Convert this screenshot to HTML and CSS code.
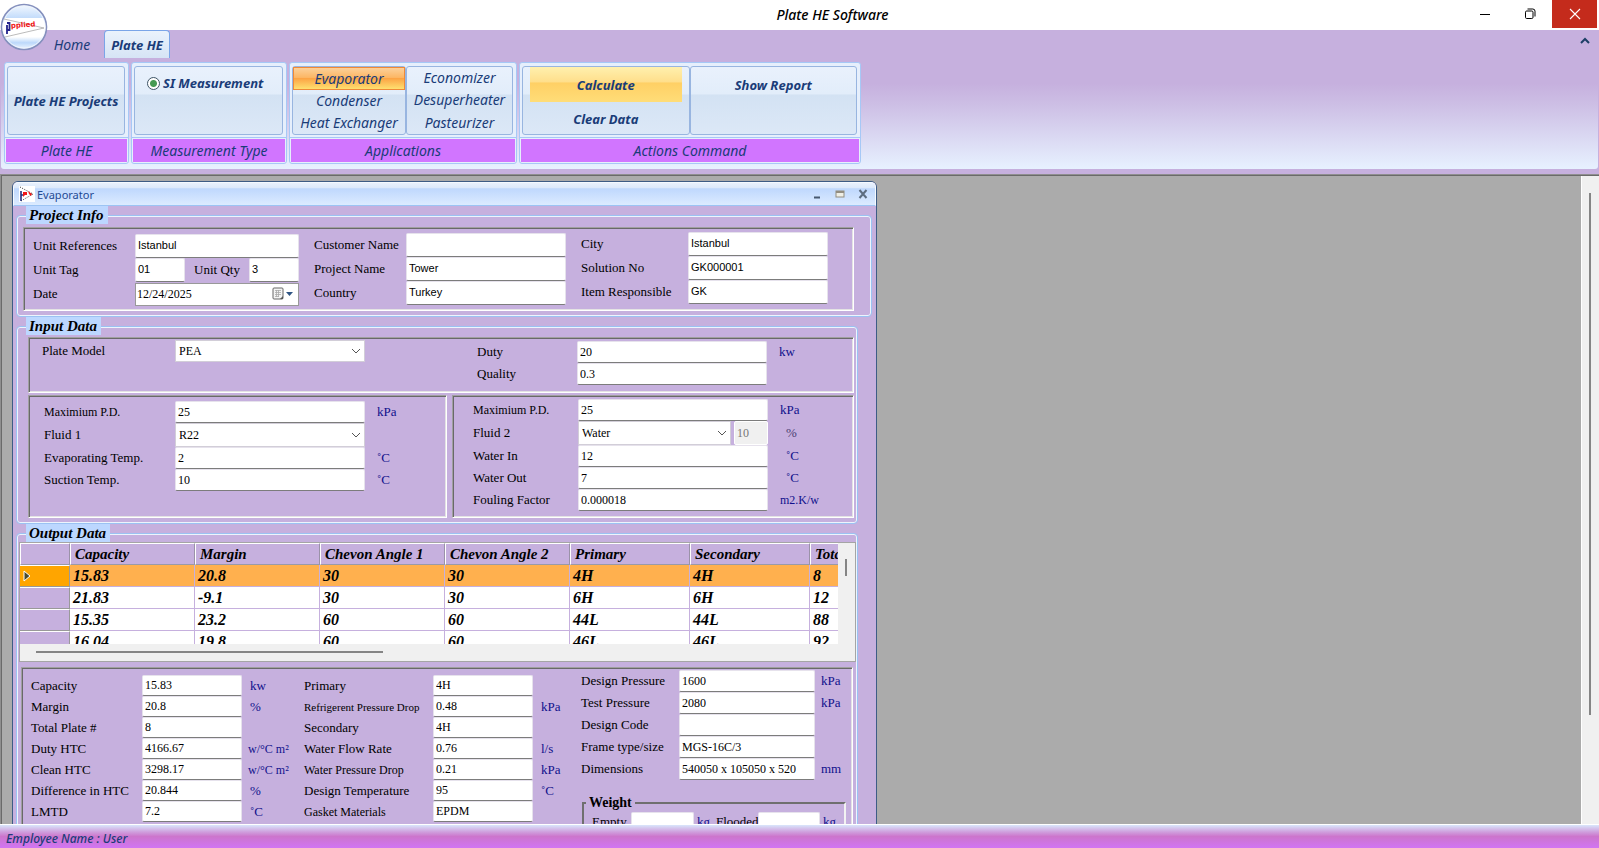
FILE: index.html
```html
<!DOCTYPE html>
<html lang="en">
<head>
<meta charset="utf-8">
<title>Plate HE Software</title>
<link rel="stylesheet" href="styles.css">
</head>
<body>
<header class="titlebar">
  <h1 class="app-title">Plate HE Software</h1>
  <div class="win-controls">
    <button class="win-btn" aria-label="Minimize"><svg width="12" height="12" viewBox="0 0 12 12"><path d="M1 6.5h10" stroke="#000"/></svg></button>
    <button class="win-btn" aria-label="Restore"><svg width="12" height="12" viewBox="0 0 12 12" fill="none" stroke="#000"><rect x="1.5" y="3" width="7.5" height="7.5" rx="1.2"/><path d="M3.5 1h5.3q2.200 0 2.200 2.200v5.300"/></svg></button>
    <button class="win-btn win-close" aria-label="Close"><svg width="12" height="12" viewBox="0 0 12 12"><path d="M1 1l10 10M11 1L1 11" stroke="#fff" stroke-width="1.1"/></svg></button>
  </div>
</header>

<button class="orb" aria-label="Application menu">
  <svg width="48" height="48" viewBox="0 0 48 48">
    <defs>
      <linearGradient id="orbTop" x1="0" y1="0" x2="0" y2="1"><stop offset="0" stop-color="#f4f9ff"/><stop offset=".3" stop-color="#c3dcfb"/><stop offset=".5" stop-color="#fff"/><stop offset=".72" stop-color="#fff"/><stop offset=".85" stop-color="#bcd8fa"/><stop offset="1" stop-color="#f2f8ff"/></linearGradient>
      <clipPath id="orbClip"><circle cx="24" cy="24" r="21"/></clipPath>
    </defs>
    <circle cx="24" cy="24" r="22.500" fill="url(#orbTop)" stroke="#8590bd" stroke-width="1.600"/>
    <circle cx="24" cy="24" r="21" fill="none" stroke="#eef4fc"/>
    <g clip-path="url(#orbClip)"><rect x="2" y="15" width="44" height="19" fill="#fff"/></g>
    <path d="M4 16L44 25L5 34" fill="none" stroke="#aaa" stroke-width=".8"/>
    <path d="M7 22v9M7 20h2.500v4M9.500 24v3H7" fill="none" stroke="#24248c" stroke-width="1.800"/>
    <text x="11" y="25" class="orb-text" transform="rotate(-4 11 25)">pplied</text>
  </svg>
</button>

<nav class="tabs">
  <button class="tab">Home</button>
  <button class="tab tab-active">Plate HE</button>
  <button class="collapse" aria-label="Collapse ribbon"><svg width="12" height="8" viewBox="0 0 12 8"><path d="M2 6l4-4 4 4" fill="none" stroke="#1d3f66" stroke-width="2"/></svg></button>
</nav>

<section class="ribbon">
  <div class="group group-plate">
    <div class="group-body"><button class="cell strong">Plate HE Projects</button></div>
    <div class="group-label">Plate HE</div>
  </div>
  <div class="group group-measure">
    <div class="group-body"><div class="cell cell-top"><label class="radio-row strong"><input type="radio" class="radio" name="unit" checked>SI Measurement</label></div></div>
    <div class="group-label">Measurement Type</div>
  </div>
  <div class="group group-apps">
    <div class="group-body">
      <div class="cell cell-stack"><button class="app-btn app-on">Evaporator</button><button class="app-btn">Condenser</button><button class="app-btn">Heat Exchanger</button></div>
      <div class="cell cell-stack cell-narrow"><button class="app-btn">Economizer</button><button class="app-btn">Desuperheater</button><button class="app-btn">Pasteurizer</button></div>
    </div>
    <div class="group-label">Applications</div>
  </div>
  <div class="group group-actions">
    <div class="group-body">
      <div class="cell cell-actions"><button class="act-btn act-on">Calculate</button><button class="act-btn act-last">Clear Data</button></div>
      <div class="cell cell-actions"><button class="act-btn">Show Report</button></div>
    </div>
    <div class="group-label">Actions Command</div>
  </div>
</section>

<main class="mdi">
  <div class="mdi-canvas">
  <section class="child">
    <header class="child-bar">
      <svg width="16" height="16" viewBox="0 0 16 16"><rect width="16" height="16" fill="#fff"/><path d="M1 1l13 7L2 15" fill="none" stroke="#333" stroke-dasharray="1 1.500"/><path d="M2 5v10M2 9h2" stroke="#24307e" stroke-width="1.600"/><path d="M4 6h4v3H6l-2 2M9 5l4 3-1 2-2-2" fill="#f01818"/></svg>
      <h2 class="child-title">Evaporator</h2>
      <div class="child-controls">
        <button class="mini" aria-label="Minimize window"><svg width="10" height="10" viewBox="0 0 10 10"><path d="M2 8.500h6" stroke="#47586f" stroke-width="2"/></svg></button>
        <button class="mini" aria-label="Maximize window"><svg width="10" height="10" viewBox="0 0 10 10"><rect x="1" y="2" width="8" height="6" fill="#efefe6" stroke="#928d80"/><path d="M1 3h8" stroke="#928d80" stroke-width="2"/></svg></button>
        <button class="mini" aria-label="Close window"><svg width="10" height="10" viewBox="0 0 10 10"><path d="M1.500 1l7 8M8.500 1l-7 8" stroke="#5d6d80" stroke-width="2"/></svg></button>
      </div>
    </header>
    <form class="child-body">
      <fieldset class="box box-wide">
        <legend class="box-title">Project Info</legend>
        <div class="panel project">
          <div class="fields proj-a">
            <label for="uref">Unit References</label><input id="uref" class="tb" value="Istanbul">
            <label for="utag">Unit Tag</label>
            <div class="tag-row"><input id="utag" class="tb" value="01"><label for="uqty">Unit Qty</label><input id="uqty" class="tb" value="3"></div>
            <label for="date">Date</label>
            <div class="date"><input id="date" class="date-text" value="12/24/2025"><button type="button" class="date-btn" aria-label="Open calendar"><svg width="22" height="14" viewBox="0 0 22 14"><rect x="1" y="1" width="10" height="11" rx="1" fill="#f4f4f4" stroke="#666"/><path d="M3 3.500h6M3 5.500h6M3 7.500h6M3 9.500h4M4.500 3v7M6.500 3v7" stroke="#aaa" stroke-width=".8"/><path d="M11 9v3H8z" fill="#555"/><path d="M14 5h7l-3.500 4z" fill="#2f5483"/></svg></button></div>
          </div>
          <div class="fields proj-b">
            <label for="cust">Customer Name</label><input id="cust" class="tb">
            <label for="proj">Project Name</label><input id="proj" class="tb" value="Tower">
            <label for="ctry">Country</label><input id="ctry" class="tb" value="Turkey">
          </div>
          <div class="fields proj-c">
            <label for="city">City</label><input id="city" class="tb" value="Istanbul">
            <label for="soln">Solution No</label><input id="soln" class="tb" value="GK000001">
            <label for="resp">Item Responsible</label><input id="resp" class="tb" value="GK">
          </div>
        </div>
      </fieldset>

      <fieldset class="box box-input">
        <legend class="box-title">Input Data</legend>
        <div class="panel model">
          <div class="fields model-a">
            <label for="model">Plate Model</label>
            <span class="combo"><select id="model"><option>PEA</option></select><svg class="chev" width="10" height="6" viewBox="0 0 10 6"><path d="M1 1l4 4 4-4" fill="none" stroke="#555"/></svg></span>
          </div>
          <div class="fields model-b">
            <label for="duty">Duty</label><input id="duty" class="tb" value="20"><span class="unit">kw</span>
            <label for="qual">Quality</label><input id="qual" class="tb" value="0.3"><span class="unit"></span>
          </div>
        </div>
        <div class="sides">
          <div class="panel side-a">
            <div class="fields side-a-fields">
              <label for="mpd1" class="small">Maximium P.D.</label><input id="mpd1" class="tb" value="25"><span class="unit">kPa</span>
              <label for="fl1">Fluid 1</label><span class="combo"><select id="fl1"><option>R22</option></select><svg class="chev" width="10" height="6" viewBox="0 0 10 6"><path d="M1 1l4 4 4-4" fill="none" stroke="#555"/></svg></span><span class="unit"></span>
              <label for="evt">Evaporating Temp.</label><input id="evt" class="tb" value="2"><span class="unit">˚C</span>
              <label for="suc">Suction Temp.</label><input id="suc" class="tb" value="10"><span class="unit">˚C</span>
            </div>
          </div>
          <div class="panel side-b">
            <div class="fields side-b-fields">
              <label for="mpd2" class="small">Maximium P.D.</label><input id="mpd2" class="tb" value="25"><span class="unit">kPa</span>
              <label for="fl2">Fluid 2</label>
              <span class="fluid"><span class="combo"><select id="fl2"><option>Water</option></select><svg class="chev" width="10" height="6" viewBox="0 0 10 6"><path d="M1 1l4 4 4-4" fill="none" stroke="#555"/></svg></span><input class="tb" value="10" aria-label="Fluid 2 percentage" disabled></span><span class="unit unit-mid unit-grey">%</span>
              <label for="win">Water In</label><input id="win" class="tb" value="12"><span class="unit unit-mid">˚C</span>
              <label for="wout">Water Out</label><input id="wout" class="tb" value="7"><span class="unit unit-mid">˚C</span>
              <label for="foul">Fouling Factor</label><input id="foul" class="tb" value="0.000018"><span class="unit unit-long">m2.K/w</span>
            </div>
          </div>
        </div>
      </fieldset>

      <fieldset class="box box-output">
        <legend class="box-title">Output Data</legend>
        <div class="grid">
          <div class="grid-view">
            <table class="results">
              <colgroup><col class="c-head"><col class="c-wide"><col class="c-wide"><col class="c-wide"><col class="c-wide"><col class="c-mid"><col class="c-mid"><col class="c-mid"></colgroup>
              <thead><tr><td></td><th scope="col">Capacity</th><th scope="col">Margin</th><th scope="col">Chevon Angle 1</th><th scope="col">Chevon Angle 2</th><th scope="col">Primary</th><th scope="col">Secondary</th><th scope="col">Total Plate</th></tr></thead>
              <tbody>
                <tr class="selected"><td class="rh"><svg width="8" height="12" viewBox="0 0 8 12"><path d="M1 1v10l6-5z" fill="#4a4a30" stroke="#fff"/></svg></td><td>15.83</td><td>20.8</td><td>30</td><td>30</td><td>4H</td><td>4H</td><td>8</td></tr>
                <tr><td class="rh"></td><td>21.83</td><td>-9.1</td><td>30</td><td>30</td><td>6H</td><td>6H</td><td>12</td></tr>
                <tr><td class="rh"></td><td>15.35</td><td>23.2</td><td>60</td><td>60</td><td>44L</td><td>44L</td><td>88</td></tr>
                <tr><td class="rh"></td><td>16.04</td><td>19.8</td><td>60</td><td>60</td><td>46L</td><td>46L</td><td>92</td></tr>
              </tbody>
            </table>
          </div>
          <div class="vbar"><span class="vthumb"></span></div>
          <div class="hbar"><span class="hthumb"></span></div>
        </div>
        <div class="panel output">
          <div class="fields out-a">
            <label for="o1">Capacity</label><input id="o1" class="tb" value="15.83"><span class="unit">kw</span>
            <label for="o2">Margin</label><input id="o2" class="tb" value="20.8"><span class="unit">%</span>
            <label for="o3">Total Plate #</label><input id="o3" class="tb" value="8"><span class="unit"></span>
            <label for="o4">Duty HTC</label><input id="o4" class="tb" value="4166.67"><span class="unit unit-long">w/°C m²</span>
            <label for="o5">Clean HTC</label><input id="o5" class="tb" value="3298.17"><span class="unit unit-long">w/°C m²</span>
            <label for="o6">Difference in HTC</label><input id="o6" class="tb" value="20.844"><span class="unit">%</span>
            <label for="o7">LMTD</label><input id="o7" class="tb" value="7.2"><span class="unit">˚C</span>
          </div>
          <div class="fields out-b">
            <label for="p1">Primary</label><input id="p1" class="tb" value="4H"><span class="unit"></span>
            <label for="p2" class="tight">Refrigerent Pressure Drop</label><input id="p2" class="tb" value="0.48"><span class="unit">kPa</span>
            <label for="p3">Secondary</label><input id="p3" class="tb" value="4H"><span class="unit"></span>
            <label for="p4">Water Flow Rate</label><input id="p4" class="tb" value="0.76"><span class="unit">l/s</span>
            <label for="p5" class="small">Water Pressure Drop</label><input id="p5" class="tb" value="0.21"><span class="unit">kPa</span>
            <label for="p6">Design Temperature</label><input id="p6" class="tb" value="95"><span class="unit">˚C</span>
            <label for="p7" class="small">Gasket Materials</label><input id="p7" class="tb" value="EPDM"><span class="unit"></span>
          </div>
          <div class="out-c">
            <div class="fields out-c-fields">
              <label for="q1">Design Pressure</label><input id="q1" class="tb" value="1600"><span class="unit">kPa</span>
              <label for="q2">Test Pressure</label><input id="q2" class="tb" value="2080"><span class="unit">kPa</span>
              <label for="q3">Design Code</label><input id="q3" class="tb"><span class="unit"></span>
              <label for="q4">Frame type/size</label><input id="q4" class="tb" value="MGS-16C/3"><span class="unit"></span>
              <label for="q5">Dimensions</label><input id="q5" class="tb" value="540050 x 105050 x 520"><span class="unit">mm</span>
            </div>
            <fieldset class="weight">
              <legend>Weight</legend>
              <div class="weight-row"><label for="w1">Empty</label><input id="w1" class="tb"><span class="unit">kg</span><label for="w2">Flooded</label><input id="w2" class="tb"><span class="unit">kg</span></div>
            </fieldset>
          </div>
        </div>
      </fieldset>
    </form>
  </section>
  </div>
  <div class="mdi-scroll"><span class="mdi-thumb"></span></div>
</main>

<footer class="status">Employee Name : User</footer>
</body>
</html>
```
FILE: styles.css
```css
:root {
  --lav: #c6b0de;
  --ink: #1a3c78;
  --ui: "Noto Sans", "Open Sans", sans-serif;
  --serif: "Liberation Serif", "Times New Roman", serif;
}
* { box-sizing: border-box; }
body {
  margin: 0;
  height: 100vh;
  display: flex;
  flex-direction: column;
  overflow: hidden;
  background: var(--lav);
  font-family: var(--ui);
}
button { margin: 0; padding: 0; border: 0; background: none; font: inherit; color: inherit; }
svg { display: block; }

/* title bar */
.titlebar {
  flex: none;
  height: 30px;
  background: #fff;
  display: grid;
  grid-template-columns: 204px 1fr 138px;
}
.app-title {
  grid-column: 2;
  margin: 0;
  text-align: center;
  font-size: 14px;
  font-weight: 500;
  font-style: italic;
  line-height: 30px;
}
.win-controls { display: flex; justify-content: flex-end; padding-right: 2px; }
.win-btn { width: 45px; height: 28px; display: grid; place-items: center; }
.win-close { background: #c42b1c; }
.orb { position: absolute; left: 0; top: 3px; width: 48px; height: 48px; }
.orb-text { font: bold 7px "DejaVu Sans", sans-serif; fill: #f01414; }

/* tabs */
.tabs { flex: none; height: 32px; padding: 0 8px 4px 46px; display: flex; gap: 6px; color: var(--ink); font-size: 14px; font-style: italic; }
.tab { width: 52px; height: 28px; }
.tab-active {
  width: 66px;
  border: 1px solid #7aa5e8;
  border-bottom: 0;
  border-radius: 4px 4px 0 0;
  background: linear-gradient(#eaf2fc, #d6e4f5);
  font-size: 13px;
  font-weight: 700;
}
.collapse { margin-left: auto; width: 12px; height: 22px; display: grid; place-items: center; }

/* ribbon */
.ribbon {
  flex: none;
  height: 107px;
  margin: 0 1px 5px;
  padding: 0 3px 5px;
  display: flex;
  gap: 2px;
  border-radius: 0 0 3px 3px;
  background: linear-gradient(var(--lav) 20%, #cdbfe5 40%, #e7f1ff);
  color: var(--ink);
}
.group {
  display: flex;
  flex-direction: column;
  border: 1px solid #a6c8f6;
  border-radius: 3px;
  background: #e6effc;
}
.group-plate { width: 125px; }
.group-measure { width: 156px; }
.group-apps { width: 228px; }
.group-actions { width: 342px; }
.group-body { flex: 1; min-height: 0; display: flex; padding: 3px 3px 2px 2px; border-bottom: 1px solid #a6c8f6; }
.group-label {
  flex: none;
  height: 23px;
  margin: 1px;
  background: #d175ff;
  text-align: center;
  font-size: 14px;
  font-style: italic;
  line-height: 24px;
}
.cell {
  flex: 1;
  min-width: 0;
  border: 1px solid #98b5e0;
  border-radius: 3px;
  background: linear-gradient(#e9f1fc 0, #e2edfa 40%, #d3e2f3 42%, #dce8f7);
  font-style: italic;
}
.cell-narrow { flex: 0 0 107px; }
.strong { font-size: 13px; font-weight: 700; }
.cell-top { padding: 6px 12px; }
.radio-row { display: flex; align-items: center; gap: 3px; height: 20px; white-space: nowrap; }
.radio {
  appearance: none;
  width: 13px;
  height: 13px;
  margin: 0;
  border: 1px solid #3f5566;
  border-radius: 50%;
  background: radial-gradient(#459a52 0 3px, #fff 4px);
}
.cell-stack { display: flex; flex-direction: column; }
.app-btn { flex: 1; font-size: 14px; font-style: italic; line-height: 22px; white-space: nowrap; }
.app-on {
  border: 1px solid #ef8a38;
  background: linear-gradient(#fcd09a, #fcb765 45%, #fca445 50%, #fee070);
  line-height: 20px;
}
.cell-actions { display: flex; flex-direction: column; padding: 0 7px; }
.act-btn { flex: none; height: 35px; font-size: 13px; font-weight: 700; font-style: italic; }
.act-last { height: 33px; }
.act-on { background: linear-gradient(#fff0ae, #ffdf8c 42%, #ffd065 46%, #ffdd78); }

/* document area */
.mdi {
  flex: 1;
  min-height: 0;
  display: flex;
  border: 1px solid #8f8f8f;
  border-right: 0;
  border-bottom: 0;
  box-shadow: inset 1px 1px #6a6a6a;
  background: #ababab;
}
.mdi-canvas { flex: 1; min-width: 0; padding: 6px 11px 0; overflow: hidden; }
.mdi-scroll { width: 18px; margin-top: 1px; background: #f0f0f0; border-left: 1px solid #fff; padding: 17px 7px; }
.mdi-thumb { display: block; width: 2px; height: 85%; background: #858585; }

/* child window */
.child { width: 865px; border: 1px solid #3d5c85; border-radius: 6px 6px 0 0; background: var(--lav); }
.child-bar {
  height: 24px;
  padding: 0 7px 0 5px;
  display: flex;
  align-items: center;
  gap: 2px;
  border: 1px solid #f5faff;
  border-bottom: 1px solid #9cc4f4;
  border-radius: 5px 5px 0 0;
  background: linear-gradient(#e8f1fd 0, #dce9fb 22%, #bfd8fd 26%, #dcebff);
}
.child-title { margin: 0; font-size: 11px; font-weight: 400; color: #1f4a94; }
.child-controls { margin-left: auto; display: flex; gap: 13px; }
.mini { width: 10px; height: 10px; }
.child-body { padding: 0 4px 0 3px; font: 13px/18px var(--serif); color: #000; }

.box {
  min-width: 0;
  margin: 0 14px 0 0;
  padding: 2px 3px 5px 3px;
  border: 1px solid #9bc2f2;
  border-radius: 4px;
  box-shadow: inset 0 0 0 1px #edf4fd;
}
.box-wide { margin-right: 0; padding: 3px 17px 5px 6px; }
.box-input { padding-left: 11px; }
.box-title {
  margin-left: 3px;
  padding: 0 4px 0 3px;
  height: 18px;
  background: #bcd7ff;
  font-size: 15px;
  font-weight: 700;
  font-style: italic;
}
.box-input .box-title { margin-left: -2px; }
.box-output .box-title { margin-left: 7px; }
.panel {
  border: 1px solid;
  border-color: #a0a0a0 #fff #fff #a0a0a0;
  box-shadow: inset 1px 1px #696969, inset -1px -1px #e3e3e3;
}
.fields { display: grid; align-content: start; align-items: center; white-space: nowrap; }
.fields label { line-height: 18px; }
.unit { color: #10108c; padding-left: 12px; }
.unit-long { font-size: 12px; }
.unit-mid { padding-left: 18px; }
.unit-grey { color: #4b3f72; }
.tb {
  display: block;
  width: 100%;
  min-width: 0;
  height: 100%;
  margin: 0;
  padding: 0 2px;
  border: 1px solid #e6e2ec;
  border-bottom-color: #7c7c7c;
  border-radius: 2px;
  background: #fff;
  font: 12px var(--serif);
  color: #000;
}
.tb:disabled { background: #f0f0f0; color: #777; border-color: #fff; }
.combo { display: grid; align-items: center; height: 100%; }
.combo select, .combo .chev { grid-area: 1 / 1; }
.combo .chev { justify-self: end; margin-right: 4px; pointer-events: none; }
.combo select {
  appearance: none;
  width: 100%;
  height: 100%;
  padding: 0 3px;
  border: 1px solid #d2ced8;
  border-radius: 0;
  background: #fff;
  font: 12px var(--serif);
  color: #000;
}

/* project info */
.project { height: 84px; display: grid; grid-template-columns: 276px 273px 1fr; }
.project .fields { grid-auto-rows: 24px; }
.project .tb { font: 11px "Liberation Sans", Arial, sans-serif; padding-bottom: 3px; }
.proj-a { grid-template-columns: 102px 164px; padding: 6px 0 0 9px; }
.proj-b { grid-template-columns: 92px 160px; padding: 5px 0 0 14px; }
.proj-c { grid-template-columns: 107px 140px; padding: 4px 0 0 8px; }
.tag-row { height: 100%; display: grid; grid-template-columns: 50px 1fr 50px; align-items: center; text-align: center; }
.date { height: 23px; display: flex; align-items: center; border: 1px solid #999; background: #fff; }
.date-text { flex: 1; min-width: 0; border: 0; padding: 0 1px; font: 12px var(--serif); }
.date-btn { width: 22px; margin-right: 4px; }

/* input data */
.model { height: 56px; display: grid; grid-template-columns: 448px 1fr; margin-bottom: 2px; }
.model-a { grid-template-columns: 133px 190px; grid-auto-rows: 22px; padding: 2px 0 0 13px; }
.model-b { grid-template-columns: 100px 190px 1fr; grid-auto-rows: 22px; padding: 3px 0 0 0; }
.sides { display: grid; grid-template-columns: 419px 1fr; gap: 5px; }
.side-a { height: 123px; }
.side-a-fields { grid-template-columns: 131px 190px 1fr; grid-template-rows: 22px 24px 22px 22px; padding: 5px 0 0 15px; }
.side-b-fields { grid-template-columns: 105px 190px 1fr; grid-template-rows: 22px 24px 22px 22px 22px; padding: 3px 0 0 20px; }
.side-b { height: 123px; }
.fluid { height: 100%; display: grid; grid-template-columns: 1fr 34px; gap: 3px; }

/* results grid */
.box-output { padding: 0 1px 0 2px; }
.grid {
  display: grid;
  grid-template-columns: 1fr 17px;
  grid-template-rows: 101px 17px;
  border: 1px solid #a5a5a5;
  background: #f0f0f0;
  margin-bottom: 5px;
}
.grid-view { overflow: hidden; background: #fff; }
.results { width: 910px; table-layout: fixed; border-collapse: separate; border-spacing: 0; font-weight: 700; font-style: italic; }
.c-head { width: 50px; }
.c-wide { width: 125px; }
.c-mid { width: 120px; }
.results td, .results th { height: 22px; padding: 0 0 0 3px; line-height: 20px; text-align: left; border-right: 1px solid var(--lav); border-bottom: 1px solid var(--lav); font-size: 16px; }
.results thead th, .results thead td {
  height: 22px;
  padding-left: 4px;
  background: var(--lav);
  font-size: 15px;
  border-right: 1px solid #9a92a8;
  border-bottom: 1px solid #9a9aa8;
  border-left: 1px solid #fff;
  border-top: 1px solid #fff;
}
.results .rh { background: var(--lav); border-right-color: #999; border-bottom-color: #999; border-top: 1px solid #fff; }
.results .selected td { background: #ffb04e; }
.results .selected .rh { background: #ffa500; }
.vbar { padding: 16px 7px; }
.vthumb { display: block; width: 2px; height: 17px; background: #858585; }
.hbar { grid-column: 1 / 3; padding: 7px 16px; }
.hthumb { display: block; width: 347px; height: 2px; background: #858585; }

/* output data */
.output { margin: 0 3px 0 2px; height: 220px; display: grid; grid-template-columns: 274px 278px 1fr; }
.out-a { grid-template-columns: 111px 100px 1fr; grid-auto-rows: 21px; padding: 7px 0 0 9px; }
.out-b { grid-template-columns: 129px 100px 1fr; grid-auto-rows: 21px; padding: 7px 0 0 8px; }
.out-a .unit, .out-b .unit { padding-left: 8px; }
.out-a .unit-long { padding-left: 6px; }
.out-c-fields { grid-template-columns: 98px 136px 1fr; grid-auto-rows: 22px; padding: 2px 0 0 7px; }
.out-c-fields .unit { padding-left: 6px; }
.small { font-size: 12px; }
.tight { font-size: 11px; }
.weight { margin: 14px 6px 0 8px; padding: 0; height: 90px; border: 2px solid; border-color: #6f6f6f #f2f2f2 #f2f2f2 #6f6f6f; }
.weight legend { margin-left: 2px; padding: 0 3px; font-weight: 700; font-size: 14px; }
.weight-row { height: 20px; padding: 0 8px; display: grid; grid-template-columns: 39px 63px 22px 42px 62px 1fr; align-items: center; }
.weight-row .unit { padding-left: 3px; }

/* status bar */
.status {
  flex: none;
  height: 24px;
  padding-left: 6px;
  border-top: 1px solid #fff;
  background: linear-gradient(#d9e6fb, #cf9fdd 30%, #cc75cc 50%, #d175f3);
  color: var(--ink);
  font-size: 12px;
  font-weight: 500;
  font-style: italic;
  line-height: 28px;
}
```
